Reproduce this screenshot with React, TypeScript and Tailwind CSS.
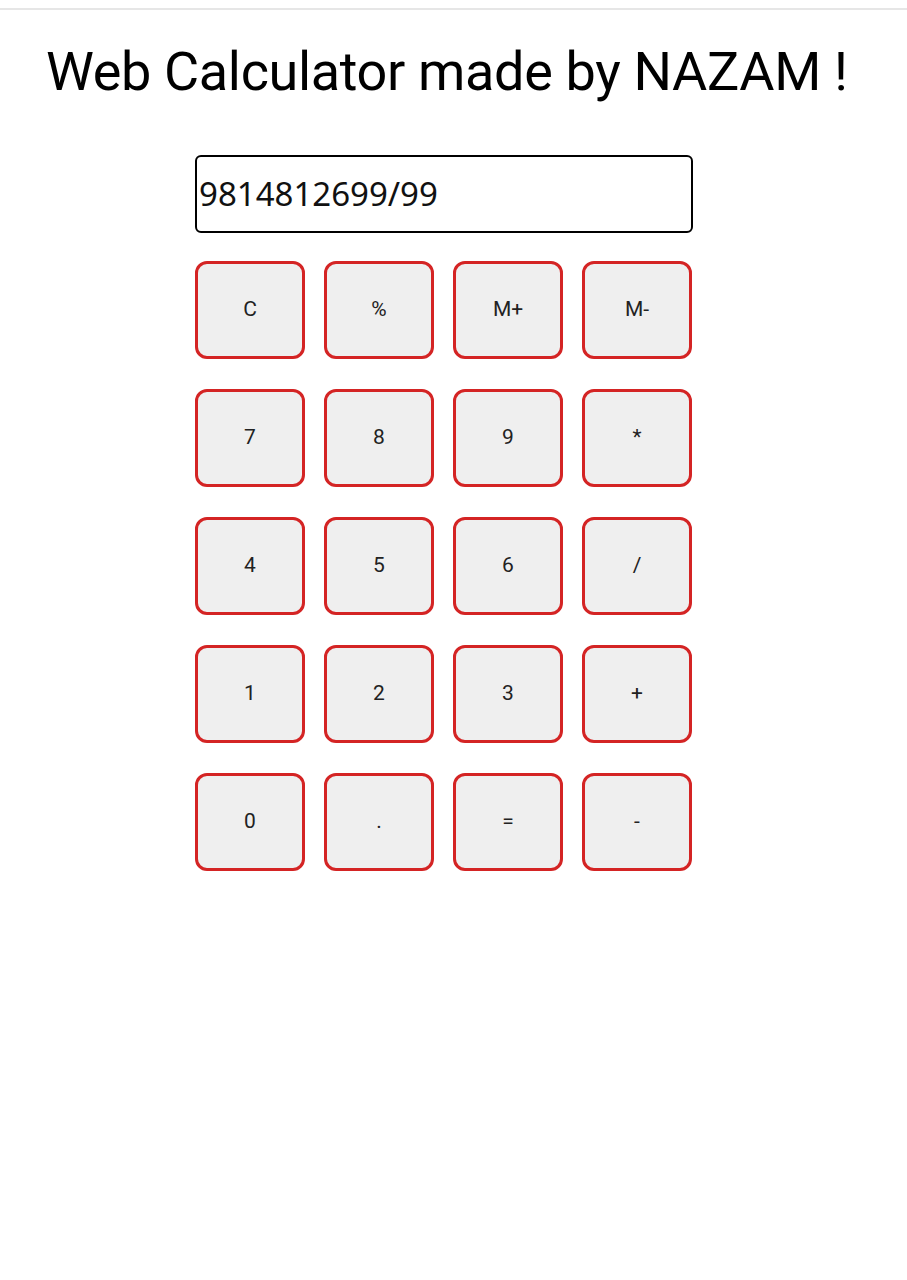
const keys = ['C', '%', 'M+', 'M-', '7', '8', '9', '*', '4', '5', '6', '/', '1', '2', '3', '+', '0', '.', '=', '-']

export default function App() {
  return (
    <div className="min-h-[1280px] w-[907px] bg-white" style={{ fontFamily: 'Roboto, sans-serif' }}>
      <div className="h-[8px]" />
      <div className="h-[2px] bg-[#e6e6e6]" />

      <h1 className="mt-[26px] pl-[46px] text-[54px] leading-[72px] font-normal tracking-[-0.35px] text-black">
        Web Calculator made by NAZAM !
      </h1>

      <div className="ml-[195px] mt-[47px] w-[498px]">
        {/* Display */}
        <div
          className="flex h-[78px] items-center rounded-[6px] border-[2.5px] border-black pl-[2px] text-[33px] text-[#111]"
          style={{ fontFamily: '"Noto Sans", sans-serif' }}
        >
          9814812699/99
        </div>

        {/* Keypad */}
        <div className="mt-[28px] grid grid-cols-[repeat(4,110px)] gap-x-[19px] gap-y-[30px]">
          {keys.map(k => (
            <button
              key={k}
              className="flex h-[98px] items-center justify-center rounded-[12px] border-[3px] border-[#d42424] bg-[#efefef] text-[21px] text-[#222]"
            >
              {k}
            </button>
          ))}
        </div>
      </div>
    </div>
  )
}
